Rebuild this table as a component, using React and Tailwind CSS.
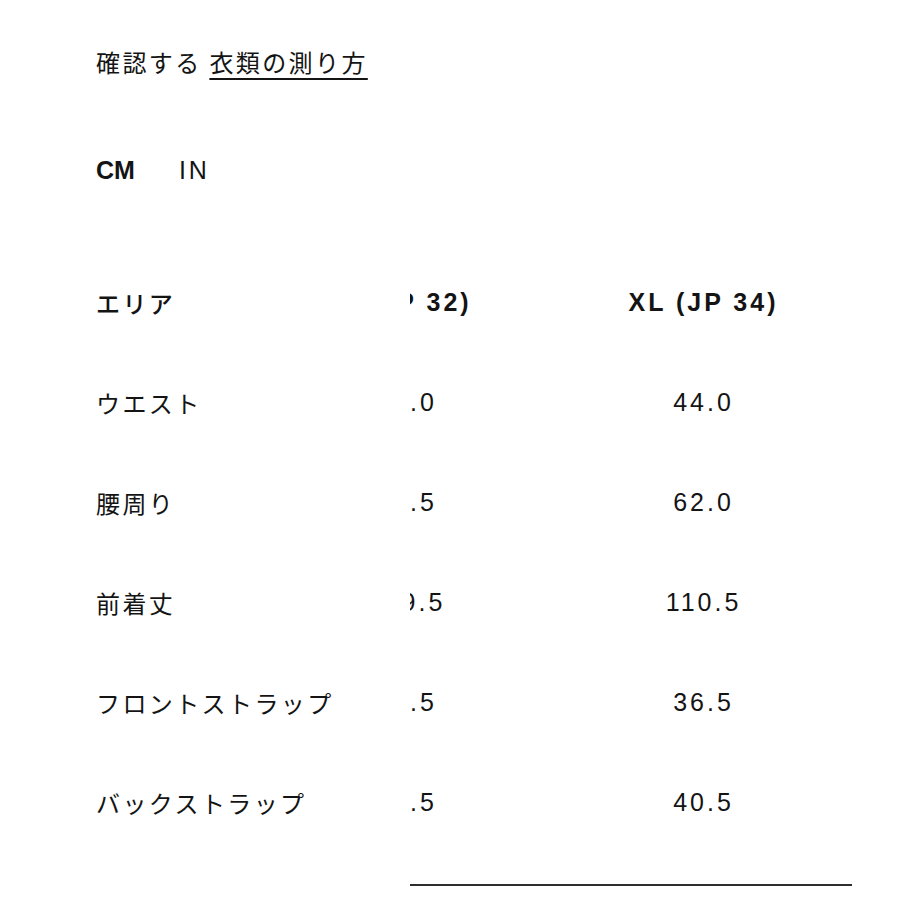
import React, { useLayoutEffect, useRef } from "react";

const sizes = [
    { label: "M (JP 30)", values: ["38.0", "56.5", "108.5", "32.5", "36.5"] },
    { label: "L (JP 32)", values: ["40.0", "58.5", "109.5", "34.5", "38.5"] },
    { label: "XL (JP 34)", values: ["44.0", "62.0", "110.5", "36.5", "40.5"] },
];

const areas = ["ウエスト", "腰周り", "前着丈", "フロントストラップ", "バックストラップ"];

const jp = { fontFamily: '"Noto Sans CJK JP", "Noto Sans", sans-serif' };
const latin = { fontFamily: '"Liberation Sans", Arial, "Noto Sans CJK JP", sans-serif' };

function App() {
    const scrollRef = useRef(null);

    useLayoutEffect(() => {
        const el = scrollRef.current;
        if (el) el.scrollLeft = el.scrollWidth;
    }, []);

    return (
        <div className="w-[900px] h-[900px] bg-white text-[#141414] pl-[96px] pt-[44px] overflow-hidden">
            {/* Title */}
            <p className="text-[24px] leading-[36px] tracking-[0.1em]" style={jp}>
                確認する <a href="#" className="underline decoration-2 underline-offset-[6px]">衣類の測り方</a>
            </p>

            {/* Unit toggle */}
            <div className="flex items-center gap-[44px] mt-[72px] text-[25px] leading-[36px]" style={latin}>
                <button className="font-bold">CM</button>
                <button className="tracking-[0.12em]">IN</button>
            </div>

            {/* Size table */}
            <div className="flex mt-[65px]">
                <div className="w-[314px] shrink-0 text-[24px] tracking-[0.1em]" style={jp}>
                    <div className="h-[100px] flex items-center font-medium">エリア</div>
                    {areas.map(a => (
                        <div key={a} className="h-[100px] flex items-center">{a}</div>
                    ))}
                </div>
                <div className="w-[442px] shrink-0">
                    <div ref={scrollRef} className="overflow-x-auto [scrollbar-width:none]">
                        <div className="flex w-max text-[25px] tracking-[0.12em]" style={latin}>
                            {sizes.map(s => (
                                <div key={s.label} className="w-[297px] shrink-0 text-center">
                                    <div className="h-[100px] flex items-center justify-center font-bold">{s.label}</div>
                                    {s.values.map((v, i) => (
                                        <div key={i} className="h-[100px] flex items-center justify-center">{v}</div>
                                    ))}
                                </div>
                            ))}
                        </div>
                    </div>
                    <div className="h-[2px] bg-[#2e2e2e] mt-[31px]"></div>
                </div>
            </div>
        </div>
    );
}

export default App;
